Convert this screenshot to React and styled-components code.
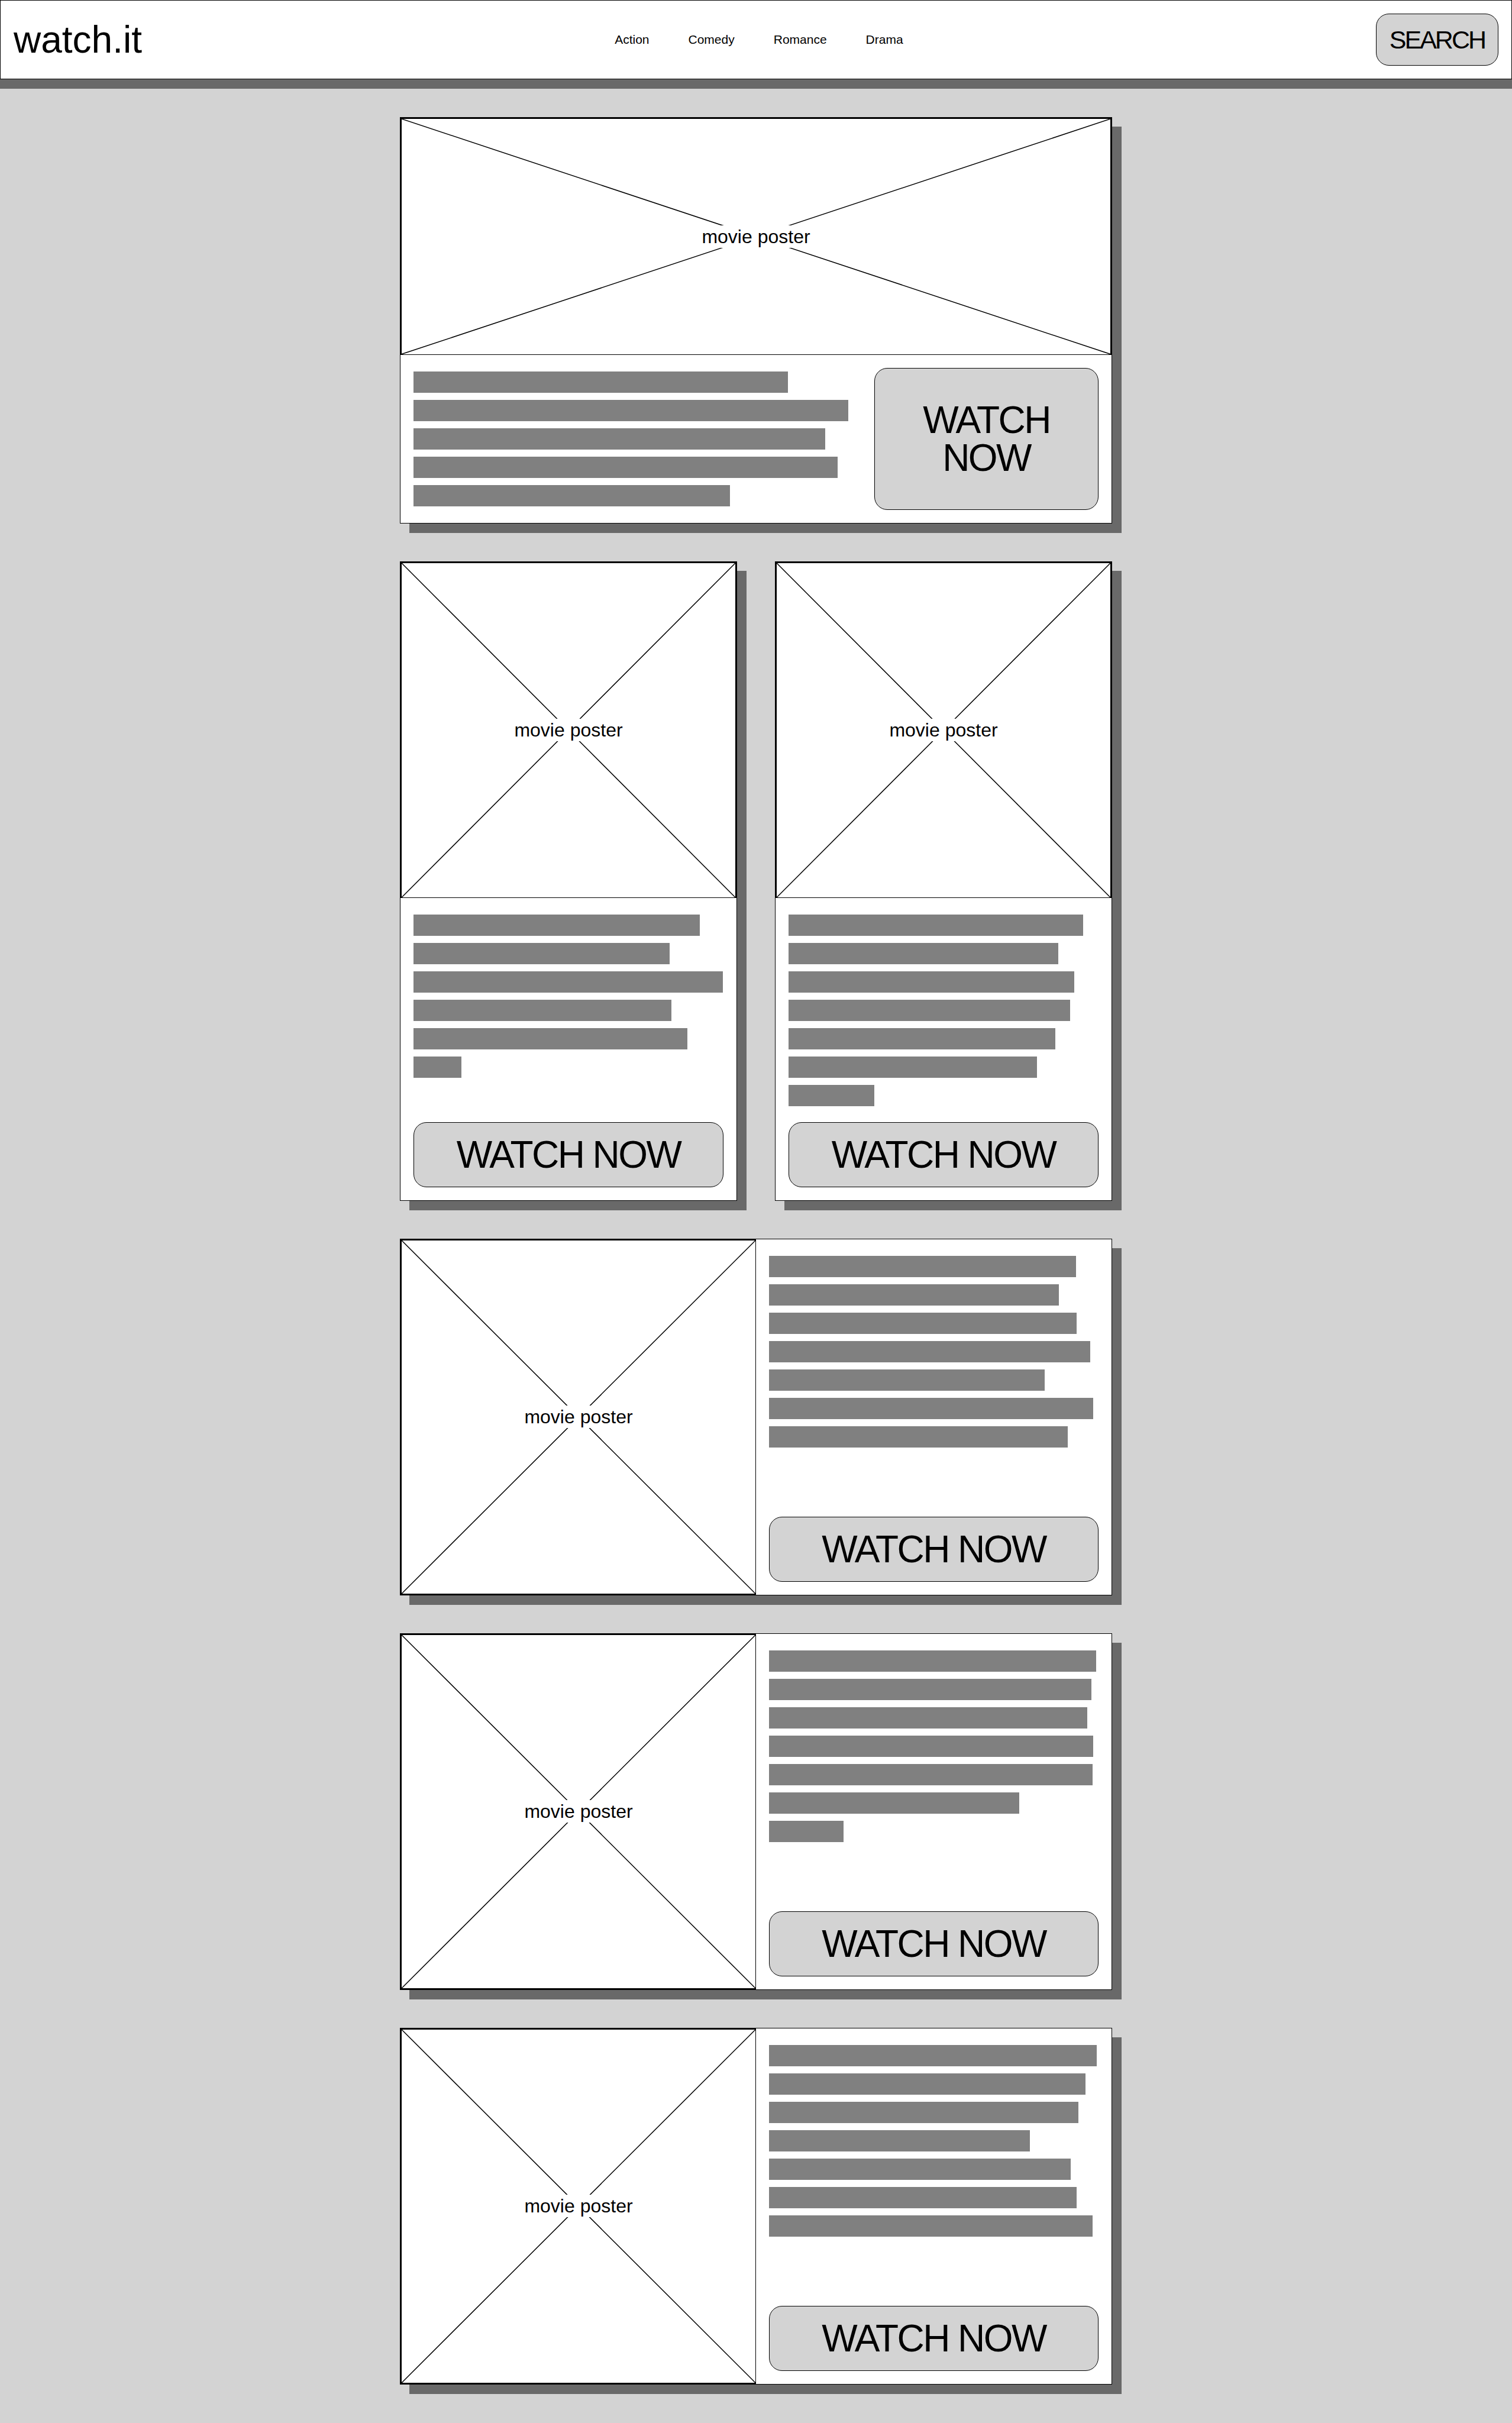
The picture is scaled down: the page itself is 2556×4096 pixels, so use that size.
import React from "react";
import styled, { createGlobalStyle, css } from "styled-components";

const GlobalStyle = createGlobalStyle`
  *, *::before, *::after {
    box-sizing: border-box;
  }
  body {
    margin: 0;
    background: lightgray;
    color: black;
    font-family: "Liberation Sans", Arial, Helvetica, sans-serif;
  }
`;

const Page = styled.div`
  display: flex;
  flex-direction: column;
  min-height: 100vh;
`;

const Header = styled.header`
  display: flex;
  align-items: center;
  justify-content: space-between;
  padding: 22px;
  border: 1px solid black;
  background: white;
  box-shadow: 0 16px 0 dimgray;
`;

const Logo = styled.a`
  color: inherit;
  font-size: 64px;
  line-height: 74px;
  text-decoration: none;
`;

const Nav = styled.nav`
  display: flex;
  gap: 66px;
`;

const NavLink = styled.a`
  color: inherit;
  font-size: 21px;
  line-height: 24px;
  text-decoration: none;
`;

const Button = styled.button`
  padding: 22px;
  border: 1px solid black;
  border-radius: 22px;
  background: lightgray;
  color: black;
  font-family: inherit;
  font-size: 64px;
  line-height: 64px;
  letter-spacing: -0.04em;
  text-align: center;
  cursor: pointer;
`;

const SearchButton = styled(Button)`
  font-size: 43px;
  line-height: 42px;
  letter-spacing: -3px;
`;

const Main = styled.main`
  display: flex;
  flex-direction: column;
  gap: 64px;
  width: 100%;
  max-width: 1204px;
  margin: 0 auto;
  padding: 64px 0;
`;

const Pair = styled.div`
  display: grid;
  grid-template-columns: 1fr 1fr;
  gap: 64px;
`;

const Card = styled.article`
  display: flex;
  flex-direction: column;
  border: 1px solid black;
  background: white;
  box-shadow: 16px 16px 0 dimgray;

  ${({ $layout }) =>
    $layout === "side" &&
    css`
      display: grid;
      grid-template-columns: 1fr 1fr;
    `}
`;

const PosterFrame = styled.div`
  display: grid;
  grid-template: minmax(0, 1fr) / minmax(0, 1fr);
  place-items: center;
  width: 100%;
  min-height: 0;
  aspect-ratio: ${({ $layout }) => ($layout === "hero" ? "3 / 1" : "1 / 1")};
  border: 2px solid black;

  ${({ $layout }) =>
    $layout === "side"
      ? css`
          border-right-width: 1px;
        `
      : css`
          border-bottom-width: 1px;
        `}
`;

const Cross = styled.svg`
  grid-area: 1 / 1;
  display: block;
  width: 100%;
  height: 100%;
  min-height: 0;
  stroke: black;
  stroke-width: 1.5;
`;

const PosterLabel = styled.span`
  grid-area: 1 / 1;
  background: white;
  font-size: 32px;
  line-height: 38px;
`;

const Details = styled.div`
  display: flex;
  flex: 1;
  flex-direction: column;
  justify-content: space-between;
  gap: 21px;
  padding: 22px;

  ${({ $layout }) =>
    $layout === "hero" &&
    css`
      display: grid;
      grid-template-columns: 2fr 1fr;
    `}
`;

const Synopsis = styled.div`
  display: flex;
  flex-direction: column;
  gap: 12px;
  padding: 6px 0;
`;

const Line = styled.div`
  width: ${({ $width }) => $width}px;
  max-width: 100%;
  height: 36px;
  background: gray;
`;

const categories = ["Action", "Comedy", "Romance", "Drama"];

const heroLines = [633, 735, 696, 717, 535];

const pairLines = [
  [484, 433, 523, 436, 463, 81],
  [498, 456, 483, 476, 451, 420, 145],
];

const listLines = [
  [519, 490, 520, 543, 466, 548, 505],
  [553, 545, 538, 548, 547, 423, 126],
  [554, 535, 523, 441, 510, 520, 547],
];

function Poster({ layout }) {
  return (
    <PosterFrame $layout={layout}>
      <Cross aria-hidden="true">
        <line x1="0" y1="0" x2="100%" y2="100%" />
        <line x1="0" y1="100%" x2="100%" y2="0" />
      </Cross>
      <PosterLabel>movie poster</PosterLabel>
    </PosterFrame>
  );
}

function MovieCard({ layout, lines }) {
  return (
    <Card $layout={layout}>
      <Poster layout={layout} />
      <Details $layout={layout}>
        <Synopsis>
          {lines.map((width, i) => (
            <Line key={i} $width={width} />
          ))}
        </Synopsis>
        <Button type="button">WATCH NOW</Button>
      </Details>
    </Card>
  );
}

export default function App() {
  return (
    <Page>
      <GlobalStyle />
      <Header>
        <Logo href="#">watch.it</Logo>
        <Nav>
          {categories.map((name) => (
            <NavLink key={name} href={`#${name.toLowerCase()}`}>
              {name}
            </NavLink>
          ))}
        </Nav>
        <SearchButton type="button">SEARCH</SearchButton>
      </Header>
      <Main>
        <MovieCard layout="hero" lines={heroLines} />
        <Pair>
          {pairLines.map((lines, i) => (
            <MovieCard key={i} layout="tall" lines={lines} />
          ))}
        </Pair>
        {listLines.map((lines, i) => (
          <MovieCard key={i} layout="side" lines={lines} />
        ))}
      </Main>
    </Page>
  );
}
